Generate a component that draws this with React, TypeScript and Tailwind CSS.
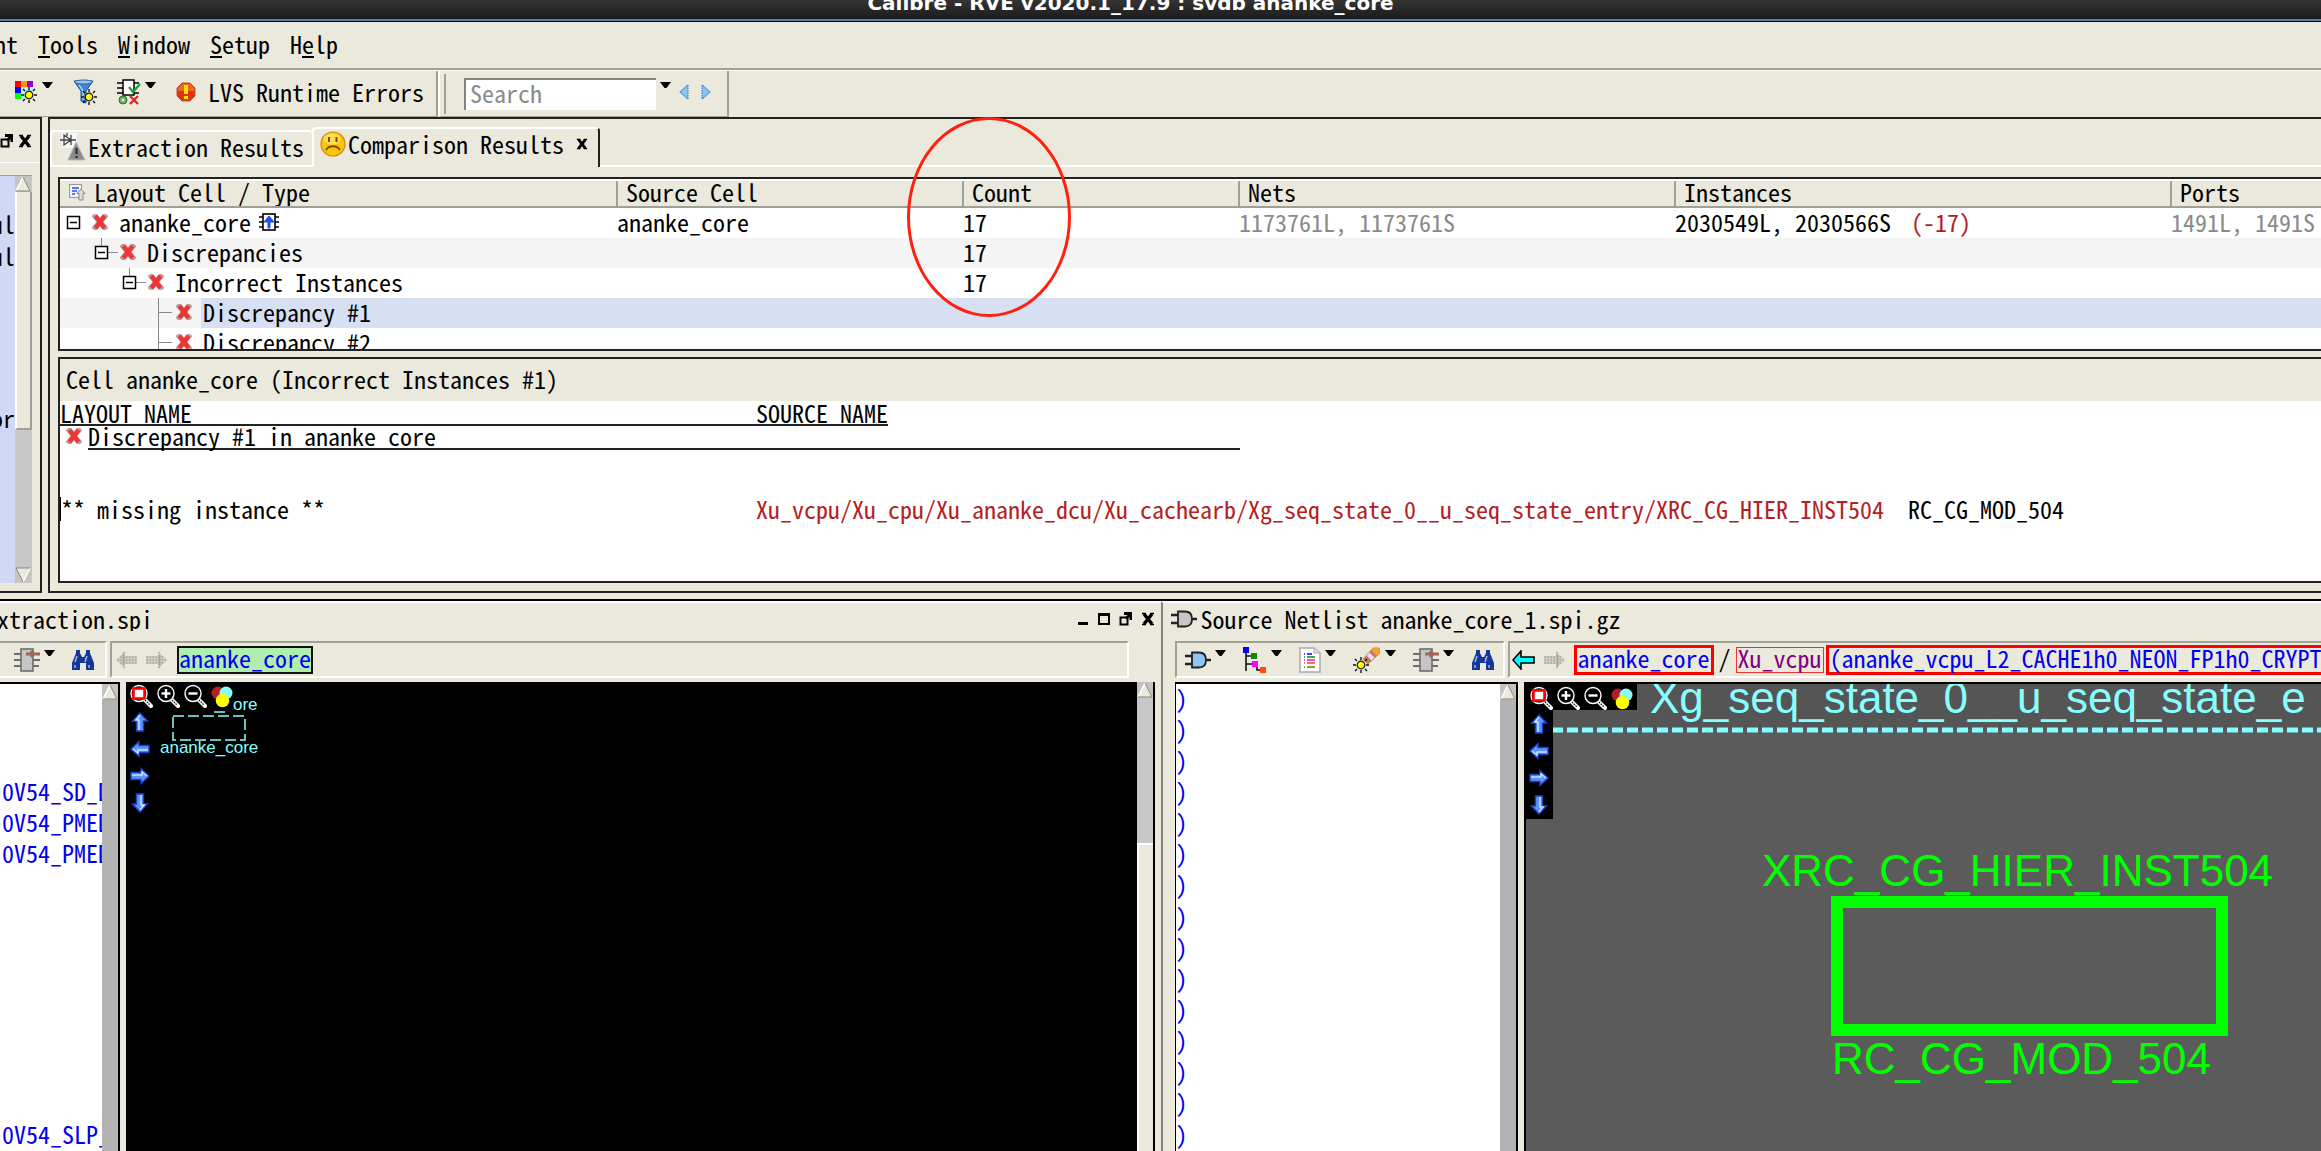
import { useState } from 'react';
import type { ReactNode } from 'react';
import clsx from 'clsx';

const menus = [
  { before: '', key: 'T', after: 'ools' },
  { before: '', key: 'W', after: 'indow' },
  { before: '', key: 'S', after: 'etup' },
  { before: 'H', key: 'e', after: 'lp' },
];

const headers = ['Layout Cell / Type', 'Source Cell', 'Count', 'Nets', 'Instances', 'Ports'];

const layoutRows = ['', '', '', '0V54_SD_D', '0V54_PMED', '0V54_PMED', '', '', '', '', '', '', '', '', '0V54_SLP_'];
const sourceRows = Array.from({ length: 15 }, () => ')');

/* ---------- icons ---------- */

function CrossIcon() {
  return (
    <svg width="16" height="16" viewBox="0 0 16 16" className="shrink-0">
      <path d="M3.5 2.5L12.5 13.5M12.5 2.5L3.5 13.5" stroke="#8d4a48" strokeWidth="5.6" strokeLinecap="square" opacity="0.55" />
      <path d="M3.5 2L12.5 14M12.5 2L3.5 14" stroke="#ee3434" strokeWidth="4.4" />
    </svg>
  );
}

function Sun({ x, y }: { x: number; y: number }) {
  return (
    <g transform={`translate(${x} ${y})`}>
      <path
        d="M0 -8V-5M0 5V8M-8 0H-5M5 0H8M-6 -6L-4 -4M6 -6L4 -4M-6 6L-4 4M6 6L4 4"
        stroke="#111"
        strokeWidth="1.4"
      />
      <circle r="3.8" fill="#ff0" stroke="#111" strokeWidth="1.2" />
    </g>
  );
}

function PaletteIcon() {
  return (
    <svg width="24" height="24" viewBox="0 0 24 24">
      <rect x="1" y="1" width="6" height="6" fill="#f00" />
      <rect x="7" y="1" width="6" height="6" fill="#ff9410" />
      <rect x="13" y="1" width="6" height="6" fill="#9400d3" />
      <rect x="1" y="7" width="6" height="6" fill="#00f" />
      <rect x="7" y="7" width="12" height="12" fill="#bdf1fb" />
      <rect x="1" y="13" width="6" height="6" fill="#0f0" />
      <Sun x={15} y={15} />
    </svg>
  );
}

function FunnelIcon() {
  return (
    <svg width="24" height="26" viewBox="0 0 24 26">
      <path d="M1 2H20L13 12V24L8 22V12Z" fill="#3f86d4" stroke="#1f4f8e" />
      <ellipse cx="10.5" cy="3" rx="9" ry="2" fill="#9cc6ee" stroke="#33659c" />
      <path d="M6 6L10 12V21" stroke="#a9d0f5" strokeWidth="1.5" fill="none" />
      <Sun x={16} y={18} />
    </svg>
  );
}

function ChipCheckIcon() {
  return (
    <svg width="24" height="26" viewBox="0 0 24 26">
      <path d="M0 4H6M0 9H6M0 14H6M17 4H22M17 14H22" stroke="#000" strokeWidth="1.5" />
      <rect x="6" y="1" width="11" height="15" fill="#fff" stroke="#000" strokeWidth="1.5" />
      <path d="M12 8L16 13L23 5" stroke="#1ca32e" strokeWidth="2.2" fill="none" />
      <circle cx="6" cy="21" r="4" fill="#6fae5c" stroke="#2f6f24" />
      <circle cx="6" cy="21" r="1.4" fill="#e4f3dc" />
      <path d="M13 17L21 25M21 17L13 25" stroke="#d7282f" strokeWidth="2.4" />
    </svg>
  );
}

function ErrorIcon() {
  return (
    <svg width="20" height="20" viewBox="0 0 20 20">
      <path d="M6 1H14L19 6V14L14 19H6L1 14V6Z" fill="#e2340a" stroke="#b55a33" />
      <path d="M6 2H14L18 6V9H2V6Z" fill="#f4702c" opacity="0.8" />
      <rect x="8" y="3" width="4" height="9" fill="#ffe600" />
      <rect x="8" y="14" width="4" height="3" fill="#ffe600" />
    </svg>
  );
}

function DropArrow() {
  return (
    <svg width="11" height="24" viewBox="0 0 11 24">
      <path d="M0 2H11L6.5 8H4.5Z" fill="#000" />
    </svg>
  );
}

function StepArrow({ flip = false }: { flip?: boolean }) {
  return (
    <svg width="10" height="16" viewBox="0 0 10 16" className={flip ? 'rotate-180' : ''}>
      <path d="M9 0V16L0 8Z" fill="#8cc4ee" />
      <path d="M9 1V15L1 8Z" fill="none" stroke="#1f76c4" strokeDasharray="1.5 1" />
    </svg>
  );
}

function RestoreIcon() {
  return (
    <svg width="14" height="14" viewBox="0 0 14 14">
      <rect x="1.5" y="5.5" width="7" height="7" fill="none" stroke="#000" strokeWidth="2" />
      <path d="M5 0H13V8H10.500V5L8 7.500L6 5.500L8.500 3H5Z" fill="#000" />
    </svg>
  );
}

function CloseIcon({ small = false }: { small?: boolean }) {
  const size = small ? 12 : 14;
  return (
    <svg width={size} height={size} viewBox="0 0 14 14">
      <path d="M1 1.500H5M9 1.500H13M1 12.500H5M9 12.500H13" stroke="#000" strokeWidth="1.500" />
      <path d="M3 2L11 12M11 2L3 12" stroke="#000" strokeWidth="3.400" />
    </svg>
  );
}

function DiodeWarnIcon() {
  return (
    <svg width="26" height="28" viewBox="0 0 26 28">
      <rect x="2" y="0" width="15" height="15" fill="#f8f8f6" />
      <path d="M0 7H16M4 2V12L11 7ZM11 2V12M7 0V3" stroke="#444" strokeWidth="1.3" fill="none" />
      <path d="M16 9L25 27H8Z" fill="#8b8b8b" stroke="#bbb" />
      <path d="M16.500 15V21M16.500 23V25" stroke="#222" strokeWidth="2" />
    </svg>
  );
}

function SadIcon() {
  return (
    <svg width="26" height="26" viewBox="0 0 26 26">
      <circle cx="13" cy="13" r="12" fill="#fbc60a" stroke="#d18a06" strokeWidth="1.2" />
      <ellipse cx="12" cy="8" rx="8.500" ry="5.500" fill="#ffe86b" opacity="0.7" />
      <path d="M9 6V11M16.500 6V11" stroke="#7a4a05" strokeWidth="2" />
      <path d="M6 19C9 14 17 14 20 19" stroke="#7a4a05" strokeWidth="2" fill="none" />
    </svg>
  );
}

function SortIcon() {
  return (
    <svg width="18" height="18" viewBox="0 0 18 18">
      <rect x="1.500" y="1.500" width="12" height="13" fill="#f2f4fb" stroke="#9a9a9a" />
      <path d="M4 5H11M4 8H9M4 11H7" stroke="#2b52e0" strokeWidth="1.600" />
      <path d="M13 6L17 10.500H15V17H11V10.500H9Z" fill="#ddd" stroke="#888" />
    </svg>
  );
}

function ChipUpIcon() {
  return (
    <svg width="20" height="18" viewBox="0 0 20 18">
      <path d="M0 4H5M0 9H5M0 14H5M15 4H20M15 9H20M15 14H20" stroke="#000" strokeWidth="1.500" />
      <rect x="4" y="1" width="12" height="16" fill="#fff" stroke="#000" strokeWidth="1.600" />
      <path d="M10 3L15 9H11V15H9V9H5Z" fill="#1c50f0" stroke="#1c50f0" />
    </svg>
  );
}

function ChipIcon() {
  return (
    <svg width="26" height="24" viewBox="0 0 26 24">
      <path d="M0 6H7M0 12H7M0 18H7M19 12H26M19 18H25" stroke="#6d6d6d" strokeWidth="2" />
      <rect x="7" y="1" width="12" height="22" fill="#c6c6c6" stroke="#6d6d6d" strokeWidth="1.600" />
      <path d="M12 6H26M17 3L20 6L17 9" stroke="#9a6a52" strokeWidth="3" fill="none" />
    </svg>
  );
}

function BinocularsIcon() {
  return (
    <svg width="24" height="20" viewBox="0 0 24 20">
      <path
        d="M5 0H9V3L11 7H13L15 3V0H19V3L23 13V20H15V13H9V20H1V13L5 3Z"
        fill="#16369a"
      />
      <path d="M6 6L4 12M16 6L14 12M4 15V18M18 15V18" stroke="#b9c9f0" strokeWidth="1.300" />
    </svg>
  );
}

function HistoryArrow({ flip = false, active = false }: { flip?: boolean; active?: boolean }) {
  return (
    <svg width="23" height="20" viewBox="0 0 23 20" className={flip ? 'rotate-180' : ''}>
      {active ? (
        <path d="M1 10L9 1V7H22V13H9V19Z" fill="#0ff" stroke="#000" strokeWidth="1.600" />
      ) : (
        <>
          <path d="M1 10L10 1V6H22V14H10V19Z" fill="#cfcdc4" />
          <path d="M2 10H22M5 7H22M5 13H22M8 4V16M9 2V18" stroke="#8e8d86" strokeDasharray="1.500 1.500" />
        </>
      )}
    </svg>
  );
}

function GateIcon({ fill }: { fill: string }) {
  return (
    <svg width="26" height="18" viewBox="0 0 26 18">
      <path d="M0 5H8M0 13H8M19 9H26" stroke="#222" strokeWidth="2.400" />
      <path d="M7 1.500H14C20 1.500 21 6 21 9C21 12 20 16.500 14 16.500H7Z" fill={fill} stroke="#222" strokeWidth="1.800" />
    </svg>
  );
}

function TreeIcon() {
  return (
    <svg width="24" height="26" viewBox="0 0 24 26">
      <path d="M3 6V24M3 9H8M3 17H10M14 20V23H18" stroke="#111" strokeWidth="1.600" fill="none" />
      <rect x="0" y="0" width="6" height="6" fill="#00f" />
      <rect x="8" y="6" width="6" height="6" fill="#0b8a0b" />
      <rect x="9" y="14" width="6" height="6" fill="#f0f" />
      <rect x="17" y="20" width="6" height="6" fill="#ff4a10" />
    </svg>
  );
}

function DocIcon() {
  return (
    <svg width="22" height="26" viewBox="0 0 22 26">
      <path d="M1 1H15L21 6V25H1Z" fill="#fff" stroke="#a9a9b5" strokeWidth="1.500" />
      <path d="M15 1V6H21" fill="#ddd" stroke="#a9a9b5" />
      <g strokeWidth="1.600">
        <path d="M5 7H6M8 7H13" stroke="#00f" />
        <path d="M5 10H6M8 10H16" stroke="#0a8a0a" />
        <path d="M5 13H6M8 13H16" stroke="#f0f" />
        <path d="M5 16H6M8 16H16" stroke="#f40" />
        <path d="M5 20H6M8 20H16" stroke="#770" />
      </g>
    </svg>
  );
}

function MarkerIcon() {
  return (
    <svg width="28" height="26" viewBox="0 0 28 26">
      <path d="M10 12L20 1L26 1L27 6L15 17Z" fill="#d4735b" stroke="#b98a6a" />
      <path d="M20 1L26 1L27 6L24 9L18 3Z" fill="#f2a23a" />
      <path d="M15 7L20 12" stroke="#d9e4f2" strokeWidth="4" />
      <Sun x={8} y={18} />
    </svg>
  );
}

function ZoomGlass({ kind }: { kind: 'fit' | 'in' | 'out' }) {
  return (
    <svg width="24" height="24" viewBox="0 0 24 24">
      <path d="M15 15L22 22" stroke="#fff" strokeWidth="4" strokeLinecap="round" />
      <path d="M16 16L21 21" stroke="#000" strokeWidth="1.200" strokeDasharray="1.500 1" />
      <circle cx="10" cy="9.500" r="8" fill="#000" stroke="#fff" strokeWidth="1.400" />
      {kind === 'fit' && <rect x="4.500" y="4.500" width="11" height="10" fill="#fff" stroke="#f00" strokeWidth="2.600" />}
      {kind !== 'fit' && <path d="M5.500 9.500H14.500" stroke="#fff" strokeWidth="2.400" />}
      {kind === 'in' && <path d="M10 5V14" stroke="#fff" strokeWidth="2.400" />}
    </svg>
  );
}

function ColorsIcon() {
  return (
    <svg width="24" height="24" viewBox="0 0 24 24">
      <circle cx="8" cy="9" r="6.500" fill="#b02020" />
      <circle cx="16" cy="9" r="6.500" fill="#8ff" />
      <circle cx="12.500" cy="16.500" r="6.800" fill="#ff0" />
    </svg>
  );
}

function PanArrow({ turn }: { turn: string }) {
  return (
    <svg width="20" height="20" viewBox="0 0 20 20" className={turn}>
      <path d="M10 1L17.500 9H13.500V19H6.500V9H2.500Z" fill="#5b94ff" stroke="#1c3fd0" strokeWidth="1.400" />
      <path d="M10 3L6 8H9V18" stroke="#c9e2ff" strokeWidth="1.500" fill="none" />
    </svg>
  );
}

/* ---------- shared pieces ---------- */

function IconButton({ label, menu = false, children }: { label: string; menu?: boolean; children: ReactNode }) {
  return (
    <button type="button" aria-label={label} className="flex shrink-0 items-center gap-1">
      {children}
      {menu && <DropArrow />}
    </button>
  );
}

function ScrollArrow({ down = false }: { down?: boolean }) {
  return (
    <svg width="16" height="16" viewBox="0 0 16 16" className={clsx('shrink-0', down && 'rotate-180')}>
      <rect width="16" height="16" fill="#c4c4c4" />
      <path d="M8 1L15 15H1Z" fill="#ebe9dc" />
      <path d="M8 1L1 15" stroke="#fff" strokeWidth="1.500" />
      <path d="M8 1L15 15H1" stroke="#8a8878" fill="none" />
    </svg>
  );
}

function CanvasTools() {
  return (
    <div className="relative flex w-fit flex-col">
      <div className="flex gap-[3px] bg-black px-[3px] pt-0.5">
        <IconButton label="Zoom fit"><ZoomGlass kind="fit" /></IconButton>
        <IconButton label="Zoom in"><ZoomGlass kind="in" /></IconButton>
        <IconButton label="Zoom out"><ZoomGlass kind="out" /></IconButton>
        <IconButton label="Colors"><ColorsIcon /></IconButton>
      </div>
      <div className="flex w-[27px] flex-col items-center gap-[7px] bg-black py-1">
        <IconButton label="Pan up"><PanArrow turn="" /></IconButton>
        <IconButton label="Pan left"><PanArrow turn="-rotate-90" /></IconButton>
        <IconButton label="Pan right"><PanArrow turn="rotate-90" /></IconButton>
        <IconButton label="Pan down"><PanArrow turn="rotate-180" /></IconButton>
      </div>
    </div>
  );
}

function NetList({ rows, className }: { rows: string[]; className: string }) {
  return (
    <div className={clsx('flex shrink-0 border-t-2 border-r-2 border-black bg-white', className)}>
      <ul className="flex min-w-0 flex-1 flex-col overflow-hidden whitespace-pre text-[#0000f0]">
        {rows.map((row, index) => (
          <li key={index} className="flex flex-1 items-center pb-1">
            {row}
          </li>
        ))}
      </ul>
      <div className="flex w-4 shrink-0 flex-col bg-[#b3b3b3]">
        <ScrollArrow />
      </div>
    </div>
  );
}

function TreeCell({
  depth,
  label,
  leaf = false,
  selected = false,
}: {
  depth: number;
  label: string;
  leaf?: boolean;
  selected?: boolean;
}) {
  return (
    <div className="flex h-[30px] items-center">
      {depth === 1 && <span className="w-[28px] shrink-0" />}
      {depth === 2 && <span className="w-[56px] shrink-0" />}
      {depth === 3 && <span className="w-[84px] shrink-0" />}
      <svg width="30" height="30" viewBox="0 0 30 30" className="shrink-0">
        {leaf ? (
          <path d="M14.500 0V30M14.500 14.500H28" stroke="#888" />
        ) : (
          <>
            {depth > 0 && <path d="M13.500 0V8M20 14.500H30" stroke="#888" />}
            <rect x="7.500" y="8.500" width="12" height="12" fill="#fff" stroke="#000" strokeWidth="1.500" />
            <path d="M10 14.500H17" stroke="#000" strokeWidth="1.500" />
          </>
        )}
      </svg>
      <span className="flex w-[27px] shrink-0 pb-0.5 pl-0.5">
        <CrossIcon />
      </span>
      <span className={clsx('flex h-full flex-1 items-center gap-2 pb-[3px] pl-0.5', selected && 'bg-[#d6e0f2]')}>
        {label}
        {depth === 0 && <ChipUpIcon />}
      </span>
    </div>
  );
}

/* ---------- page ---------- */

export default function App() {
  const [search, setSearch] = useState('');
  const [activeTab, setActiveTab] = useState('comparison');

  return (
    <div className="flex min-h-screen flex-col overflow-hidden bg-[#ebe9dc] font-['Noto_Sans_Mono_CJK_SC','Liberation_Mono',monospace] text-[24px] leading-6 whitespace-nowrap text-black">
      {/* window title */}
      <header className="flex h-[21px] items-end justify-center overflow-hidden border-b-2 border-[#5c7ba8] bg-linear-to-b from-[#343434] to-[#1c1c1c] pr-[60px] pb-1.5">
        <h1 className="font-['DejaVu_Sans',sans-serif] text-[20px] leading-5 font-bold text-white">
          Calibre - RVE v2020.1_17.9 : svdb ananke_core
        </h1>
      </header>

      {/* menu bar */}
      <nav className="flex h-[49px] items-center gap-5 border-t border-b-2 border-t-black border-b-[#a19f96] pb-[3px]">
        <span className="flex w-[18px] justify-end overflow-hidden">nt</span>
        {menus.map((menu) => (
          <button type="button" key={menu.key}>
            {menu.before}
            <span className="underline decoration-2 underline-offset-2">{menu.key}</span>
            {menu.after}
          </button>
        ))}
      </nav>

      {/* tool bar */}
      <div className="flex h-[47px] items-stretch border-t border-white">
        <div className="flex items-center gap-5 border-r-2 border-b border-[#a19f96] pr-3 pb-[3px] pl-3.5">
          <IconButton label="Highlight colors" menu><PaletteIcon /></IconButton>
          <IconButton label="Filter"><FunnelIcon /></IconButton>
          <IconButton label="Check" menu><ChipCheckIcon /></IconButton>
          <button type="button" className="flex items-center gap-3">
            <ErrorIcon />
            LVS Runtime Errors
          </button>
        </div>
        <form className="flex items-center border-r-2 border-b border-l-2 border-[#a19f96] border-l-white pr-4 pl-1">
          <span className="mr-[18px] h-10 w-0.5 bg-[#a19f96]" />
          <input
            aria-label="Search"
            placeholder="Search"
            value={search}
            onChange={(e) => setSearch(e.target.value)}
            className="h-8 w-48 border-t-2 border-l-2 border-[#85837a] bg-white pb-1 pl-1 outline-none placeholder:text-[#8a8a8a]"
          />
          <span className="flex items-center gap-2 pb-[3px] pl-1">
            <IconButton label="Search history"><DropArrow /></IconButton>
            <span className="flex gap-3">
              <IconButton label="Previous"><StepArrow /></IconButton>
              <IconButton label="Next"><StepArrow flip /></IconButton>
            </span>
          </span>
        </form>
      </div>

      {/* results */}
      <main className="relative flex h-[476px] shrink-0 gap-1.5">
        <aside className="flex w-[42px] shrink-0 flex-col border-t-2 border-r-2 border-b-2 border-[#222]">
          <div className="flex h-[43px] items-center gap-1">
            <IconButton label="Detach panel"><RestoreIcon /></IconButton>
            <IconButton label="Close panel"><CloseIcon /></IconButton>
          </div>
          <div className="flex flex-1 border-t border-white pt-3 pb-2">
            <div className="flex w-[15px] flex-col items-end overflow-hidden border-t border-[#a19f96] bg-[#d0d8f6] pt-9">
              <span className="h-8">ul</span>
              <span className="h-8">ul</span>
              <span className="h-[130px]" />
              <span className="h-8">or</span>
            </div>
            <div className="flex w-[17px] flex-col border-t border-[#a19f96] bg-[#c8c8c8]">
              <ScrollArrow />
              <span className="h-[238px] border-r-2 border-b-2 border-l-2 border-[#a19f96] border-l-white bg-[#ebe9dc]" />
              <span className="flex-1" />
              <ScrollArrow down />
            </div>
          </div>
        </aside>

        <section className="flex min-w-0 flex-1 flex-col border-t-2 border-b-2 border-l-2 border-[#222]">
          <div role="tablist" className="flex h-[48px] shrink-0 items-end pt-2">
            <button
              type="button"
              role="tab"
              aria-selected={activeTab === 'extraction'}
              onClick={() => setActiveTab('extraction')}
              className="flex h-[37px] items-center gap-0.5 rounded-t-sm border-t-2 border-b-2 border-l-2 border-white pr-2 pb-1 pl-2"
            >
              <DiodeWarnIcon />
              Extraction Results
            </button>
            <button
              type="button"
              role="tab"
              aria-selected={activeTab === 'comparison'}
              onClick={() => setActiveTab('comparison')}
              className="flex h-10 items-center gap-0.5 rounded-t-sm border-t-2 border-r-2 border-l-2 border-t-white border-r-[#222] border-l-white pr-2.5 pb-2 pl-1.5"
            >
              <SadIcon />
              Comparison Results
              <span className="pl-2.5">
                <CloseIcon small />
              </span>
            </button>
            <span className="flex-1 border-b-2 border-white" />
          </div>

          <div className="mt-2.5 ml-2 h-[174px] shrink-0 overflow-hidden border-t-2 border-b-2 border-l-2 border-[#222] bg-white pt-0.5">
            <table className="w-full table-fixed border-collapse">
              <colgroup>
                <col className="w-[557px]" />
                <col className="w-[346px]" />
                <col className="w-[276px]" />
                <col className="w-[436px]" />
                <col className="w-[496px]" />
                <col />
              </colgroup>
              <thead>
                <tr className="h-[26px] bg-[#ebe9dc] text-left leading-5">
                  {headers.map((header, index) => (
                    <th
                      key={header}
                      className="h-[26px] overflow-hidden border-r-2 border-b-2 border-[#a19f96] p-0 pb-[3px] pl-2 font-normal last:border-r-0"
                    >
                      <span className="flex items-center gap-2">
                        {index === 0 && <SortIcon />}
                        {header}
                      </span>
                    </th>
                  ))}
                </tr>
              </thead>
              <tbody>
                <tr>
                  <td className="p-0"><TreeCell depth={0} label="ananke_core" /></td>
                  <td className="p-0 pb-[3px]">ananke_core</td>
                  <td className="p-0 pb-[3px]">17</td>
                  <td className="p-0 pb-[3px] text-[#8a8a8a]">1173761L, 1173761S</td>
                  <td className="p-0 pb-[3px]">
                    2030549L, 2030566S <span className="pl-2 text-[#b41e1e]">(-17)</span>
                  </td>
                  <td className="p-0 pb-[3px] text-[#8a8a8a]">1491L, 1491S</td>
                </tr>
                <tr className="bg-[#f4f4f4]">
                  <td className="p-0"><TreeCell depth={1} label="Discrepancies" /></td>
                  <td className="p-0" />
                  <td className="p-0 pb-[3px]">17</td>
                  <td className="p-0" colSpan={3} />
                </tr>
                <tr>
                  <td className="p-0"><TreeCell depth={2} label="Incorrect Instances" /></td>
                  <td className="p-0" />
                  <td className="p-0 pb-[3px]">17</td>
                  <td className="p-0" colSpan={3} />
                </tr>
                <tr className="bg-[#f4f4f4]">
                  <td className="p-0"><TreeCell depth={3} label="Discrepancy #1" leaf selected /></td>
                  <td className="bg-[#d6e0f2] p-0" colSpan={5} />
                </tr>
                <tr>
                  <td className="p-0"><TreeCell depth={3} label="Discrepancy #2" leaf /></td>
                  <td className="p-0" colSpan={5} />
                </tr>
              </tbody>
            </table>
          </div>

          <div className="mt-1.5 mb-2 ml-2 flex min-h-0 flex-1 flex-col border-t-2 border-b-2 border-l-2 border-[#222] bg-white">
            <h2 className="flex h-[42px] shrink-0 items-center bg-[#ebe9dc] pb-[3px] pl-1.5">
              Cell ananke_core (Incorrect Instances #1)
            </h2>
            <div className="flex h-[25px] w-[828px] items-center border-b-2 border-[#222]">
              <span className="w-[696px]">LAYOUT NAME</span>
              <span>SOURCE NAME</span>
            </div>
            <div className="flex h-6 items-stretch leading-5">
              <span className="flex w-[28px] items-center pb-1 pl-1.5">
                <CrossIcon />
              </span>
              <span className="w-[1152px] border-b-2 border-[#222]">Discrepancy #1 in ananke core</span>
            </div>
            <div className="flex items-center pt-[47px]">
              <span className="w-[696px] border-l border-black">** missing instance **</span>
              <span className="w-[1152px] text-[#b41e1e]">
                Xu_vcpu/Xu_cpu/Xu_ananke_dcu/Xu_cachearb/Xg_seq_state_0__u_seq_state_entry/XRC_CG_HIER_INST504
              </span>
              <span>RC_CG_MOD_504</span>
            </div>
          </div>
        </section>

        {/* hand-drawn mark round the counts */}
        <div className="pointer-events-none absolute top-0 left-[907px] h-[200px] w-[164px] rounded-[50%] border-3 border-[#ff2010]" />
      </main>

      {/* netlists */}
      <div className="mt-1.5 flex flex-1 border-t-2 border-black">
        <section className="flex w-1/2 min-w-0 flex-col border-t-2 border-white">
          <div className="flex h-[38px] shrink-0 items-center justify-between pr-1.5 pb-1.5">
            <h2 className="flex w-[153px] justify-end overflow-hidden">xtraction.spi</h2>
            <div className="flex items-center gap-2">
              <IconButton label="Minimize">
                <svg width="12" height="14" viewBox="0 0 12 14"><rect x="1" y="10" width="10" height="3" /></svg>
              </IconButton>
              <IconButton label="Maximize">
                <svg width="14" height="14" viewBox="0 0 14 14">
                  <path d="M1 1H13V13H1ZM3 4V11H11V4Z" fillRule="evenodd" />
                </svg>
              </IconButton>
              <IconButton label="Detach"><RestoreIcon /></IconButton>
              <IconButton label="Close"><CloseIcon /></IconButton>
            </div>
          </div>
          <div className="mr-8 flex h-[37px] shrink-0">
            <div className="flex w-[107px] items-center gap-4 border-t-2 border-r-2 border-b-2 border-t-[#a19f96] border-r-white border-b-white pl-3.5">
              <IconButton label="Device" menu><ChipIcon /></IconButton>
              <IconButton label="Find"><BinocularsIcon /></IconButton>
            </div>
            <div className="ml-[3px] flex flex-1 items-center gap-[7px] border-2 border-t-[#a19f96] border-r-white border-b-white border-l-[#a19f96] pl-[3px]">
              <IconButton label="Back"><HistoryArrow /></IconButton>
              <IconButton label="Forward"><HistoryArrow flip /></IconButton>
              <a href="#core" className="ml-0.5 border-2 border-[#111] bg-[#b0eeb0] pb-1 leading-5 text-[#0000f0]">
                ananke_core
              </a>
            </div>
          </div>
          <div className="mt-1 flex flex-1">
            <NetList rows={layoutRows} className="w-[120px] pl-0.5" />
            <div className="relative ml-1.5 min-w-0 flex-1 bg-black">
              <CanvasTools />
              <svg className="pointer-events-none absolute inset-0 h-full w-full">
                <rect x="47" y="34" width="72" height="24" fill="none" stroke="#8ff" strokeWidth="1.500" strokeDasharray="11 4" />
                <path d="M88 30H99" stroke="#8ff" strokeWidth="1.500" />
                <g fill="#8ff" fontFamily="Liberation Sans, sans-serif" fontSize="17">
                  <text x="107" y="28">ore</text>
                  <text x="34" y="71">ananke_core</text>
                </g>
              </svg>
            </div>
            <div className="mr-1.5 flex w-[18px] shrink-0 flex-col border-r-2 border-black bg-[#c8c8c8]">
              <ScrollArrow />
              <span className="h-[145px]" />
              <span className="flex-1 border-t-2 border-l-2 border-white bg-[#ebe9dc]" />
            </div>
          </div>
        </section>

        <section className="flex min-w-0 flex-1 flex-col border-t-2 border-l-2 border-t-white border-l-[#85837a]">
          <div className="flex h-[38px] shrink-0 items-center gap-1 pb-1.5 pl-2">
            <GateIcon fill="#c6c6c6" />
            <h2>Source Netlist ananke_core_1.spi.gz</h2>
          </div>
          <div className="ml-3 flex h-[37px] shrink-0">
            <div className="flex w-[330px] shrink-0 items-center justify-between border-2 border-t-[#a19f96] border-r-white border-b-white border-l-[#a19f96] px-2">
              <IconButton label="Instance" menu><GateIcon fill="#8cc4f8" /></IconButton>
              <IconButton label="Hierarchy" menu><TreeIcon /></IconButton>
              <IconButton label="Report" menu><DocIcon /></IconButton>
              <IconButton label="Highlight" menu><MarkerIcon /></IconButton>
              <IconButton label="Device" menu><ChipIcon /></IconButton>
              <IconButton label="Find"><BinocularsIcon /></IconButton>
            </div>
            <div className="ml-[3px] flex min-w-0 flex-1 items-center gap-2 overflow-hidden border-t-2 border-b-2 border-l-2 border-t-[#a19f96] border-b-white border-l-[#a19f96] pl-0.5">
              <IconButton label="Back"><HistoryArrow active /></IconButton>
              <IconButton label="Forward"><HistoryArrow flip /></IconButton>
              <div className="flex items-center leading-5">
                <a href="#core" className="border-3 border-[#f00] px-px pb-1 text-[#0000f0]">ananke_core</a>
                <span className="px-[5px] pb-1">/</span>
                <a href="#vcpu" className="border border-[#e33] px-px pb-1 text-[#800080]">Xu_vcpu</a>
                <a href="#cell" className="ml-0.5 border-3 border-[#f00] px-px pb-1 text-[#0000f0]">
                  (ananke_vcpu_L2_CACHE1h0_NEON_FP1h0_CRYPTO
                </a>
              </div>
            </div>
          </div>
          <div className="mt-1 ml-3 flex flex-1">
            <NetList rows={sourceRows} className="w-[343px] border-l" />
            <div className="relative ml-1.5 min-w-0 flex-1 overflow-hidden border-t-2 border-l-2 border-black bg-[#5b5b5b]">
              <svg className="pointer-events-none absolute inset-0 h-full w-full">
                <rect width="100%" height="45" fill="#555" />
                <line x1="26" y1="46" x2="100%" y2="46" stroke="#8ff" strokeWidth="5" strokeDasharray="11 4" />
                <rect x="311" y="218" width="385" height="128" fill="none" stroke="#0f0" strokeWidth="12" />
                <g fontFamily="Liberation Sans, sans-serif" fontSize="44">
                  <text x="124" y="29" fill="#8ff">Xg_seq_state_0__u_seq_state_e</text>
                  <text x="236" y="202" fill="#0f0">XRC_CG_HIER_INST504</text>
                  <text x="306" y="390" fill="#0f0">RC_CG_MOD_504</text>
                </g>
              </svg>
              <CanvasTools />
            </div>
          </div>
        </section>
      </div>
    </div>
  );
}
